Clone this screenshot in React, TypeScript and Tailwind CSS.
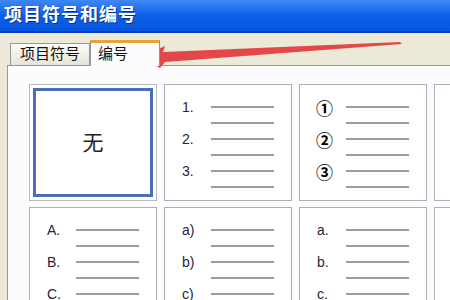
const font = { fontFamily: '"Liberation Sans", "Noto Sans CJK SC", sans-serif' }

type Card = { labels?: string[]; circled?: boolean; selected?: boolean; empty?: boolean }

const row1: Card[] = [
  { selected: true },
  { labels: ['1.', '2.', '3.'] },
  { labels: ['①', '②', '③'], circled: true },
  { empty: true },
]
const row2: Card[] = [
  { labels: ['A.', 'B.', 'C.'] },
  { labels: ['a)', 'b)', 'c)'] },
  { labels: ['a.', 'b.', 'c.'] },
  { empty: true },
]

const ListCard = ({ card }: { card: Card }) => {
  if (card.selected) {
    return (
      <div className="h-[117px] w-[128px] border border-[#b7bcc2] bg-white p-[3px]">
        <div className="flex h-full w-full items-center justify-center border-[3px] border-[#4b6eb8] bg-white text-[21px] text-[#222]">
          无
        </div>
      </div>
    )
  }
  return (
    <div className="h-[117px] w-[128px] border border-[#a9b0b7] bg-white">
      {!card.empty && (
        <div className="flex flex-col pt-[14px]">
          {[0, 1, 2, 3, 4, 5].map((i) => (
            <div key={i} className="flex h-4 items-center">
              <span
                className={
                  card.circled
                    ? 'w-[29px] pl-[16px] font-["Noto_Sans_CJK_SC",sans-serif] text-[17px] font-bold leading-none text-black'
                    : 'w-[29px] pl-[17px] text-[14px] leading-none text-[#2a2438]'
                }
              >
                {i % 2 === 0 ? card.labels![i / 2] : ''}
              </span>
              <span className="ml-[17px] h-[2px] w-[63px] bg-[#9c9c9c]" />
            </div>
          ))}
        </div>
      )}
    </div>
  )
}

export default function App() {
  return (
    <div className="relative h-[300px] w-[450px] overflow-hidden bg-[#ece9d8]" style={font}>
      {/* title bar */}
      <div className="flex h-[33px] items-center border-b-2 border-[#0a3cb8] bg-gradient-to-b from-[#3f88f7] via-[#0b5fe8] to-[#0654de] pl-[4px]">
        <span className="text-[18px] font-bold tracking-[1px] text-white [text-shadow:1px_1px_0_#0b2e8a]">
          项目符号和编号
        </span>
      </div>

      {/* tabs */}
      <div className="flex items-end pl-[10px] pt-[7px]">
        <div className="flex h-[22px] w-[80px] items-center justify-center border border-b-0 border-[#919b9c] bg-gradient-to-b from-[#fbfbf9] to-[#e6e4da] text-[15px] text-[#111]">
          项目符号
        </div>
        <div className="relative z-10 -mb-px flex h-[26px] w-[70px] items-center border-x border-[#919b9c] border-t-[3px] border-t-[#e6a43a] bg-[#fcfcfe] pl-[7px] text-[15px] text-[#111]">
          编号
        </div>
      </div>

      {/* panel */}
      <div className="ml-[7px] h-[300px] border-l border-t border-[#919b9c] bg-[#fcfcfe] pl-[21px] pt-[18px]">
        <div className="grid w-[560px] grid-cols-[128px_128px_128px_128px] gap-x-[7px] gap-y-[6px]">
          {row1.map((c, i) => (
            <ListCard key={'a' + i} card={c} />
          ))}
          {row2.map((c, i) => (
            <ListCard key={'b' + i} card={c} />
          ))}
        </div>
      </div>

      {/* red arrow annotation */}
      <svg className="absolute left-0 top-0" width="450" height="300">
        <polygon
          points="140,57 165,46 163,52 400,42 402,44 165,62 160,68"
          fill="#e2484a"
        />
      </svg>
    </div>
  )
}
